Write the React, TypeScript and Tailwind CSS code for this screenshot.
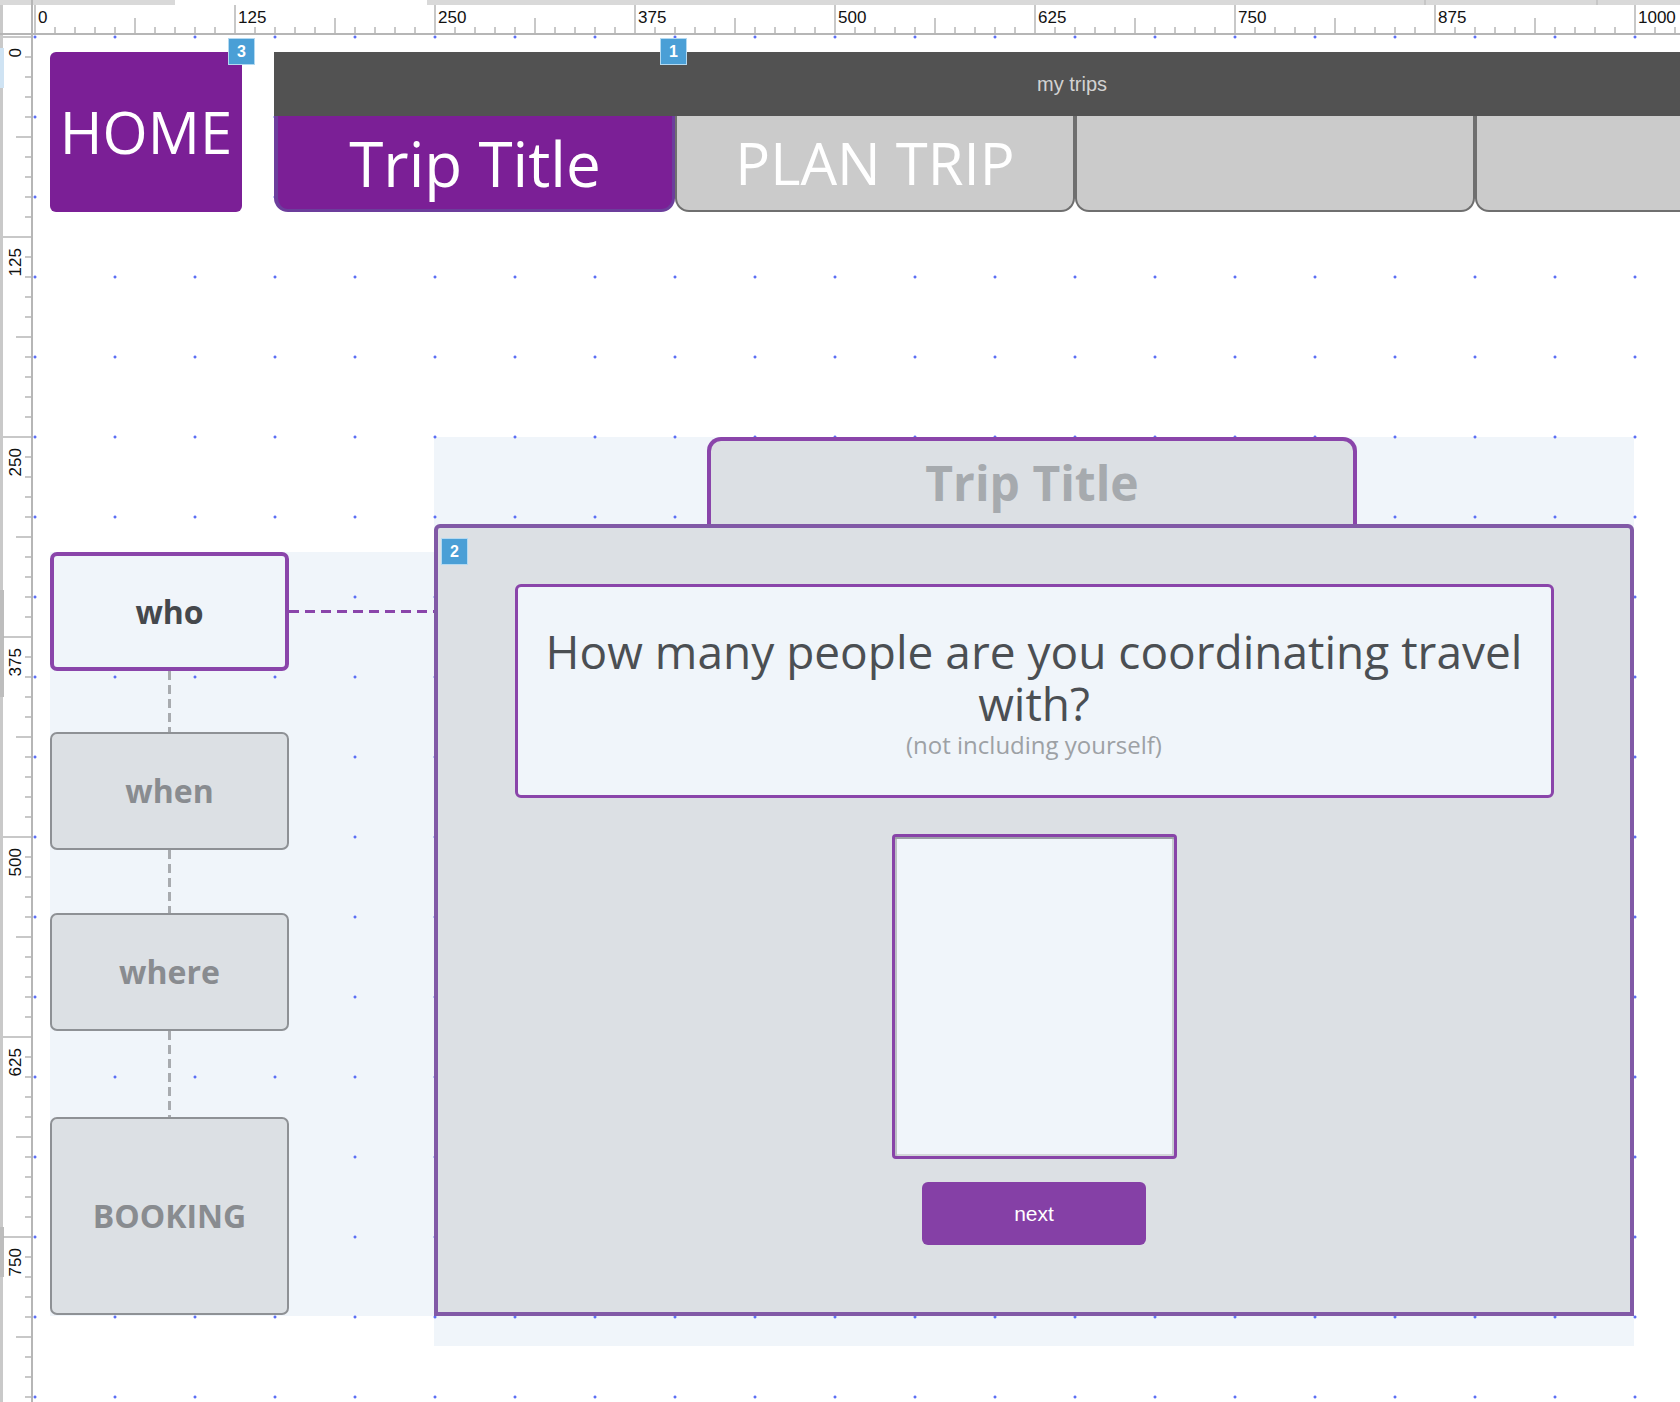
import React from "react";

// dot grid, pinned to the viewport so every panel lines up with the same grid
const DOTS =
  "bg-fixed [background-image:radial-gradient(circle,#5b6ef5_1.2px,transparent_1.8px)] [background-size:80px_80px] [background-position:-5px_-3px]";

function Badge({ n, className }: { n: string; className: string }) {
  return (
    <div
      className={`absolute z-10 w-[27px] h-[27px] bg-[#4a9fd6] border-[1.5px] border-[#b3d9f1] flex items-center justify-center text-white text-[16px] font-bold leading-none font-['Liberation_Sans',Arial,sans-serif] ${className}`}
    >
      {n}
    </div>
  );
}

function TopRuler() {
  const items = [];
  for (let k = 0; k <= 82; k++) {
    const x = 2 + 20 * k;
    const major = k % 10 === 0;
    const mid = k % 5 === 0;
    items.push(
      <line key={`t${k}`} x1={x} x2={x} y1={major ? 5 : mid ? 18 : 27} y2={34} stroke="#b6b6b6" strokeWidth={1.5} />
    );
    if (major) {
      items.push(
        <text key={`l${k}`} x={x + 3} y={23} fontSize={17} fill="#111">
          {(k / 10) * 125}
        </text>
      );
    }
  }
  return (
    <svg width={1647} height={35} className="block font-['Liberation_Sans',Arial,sans-serif]">
      <rect x={0} y={0} width={142} height={5} fill="#d9d9d9" />
      <rect x={394} y={0} width={1253} height={5} fill="#d9d9d9" />
      <line x1={1392} x2={1392} y1={0} y2={5} stroke="#b3b3b3" strokeWidth={1} />
      <line x1={1564} x2={1564} y1={0} y2={5} stroke="#b3b3b3" strokeWidth={1} />
      {items}
      <line x1={0} x2={1647} y1={34} y2={34} stroke="#b6b6b6" strokeWidth={2} />
    </svg>
  );
}

function LeftRuler() {
  const items = [];
  for (let k = 0; k <= 68; k++) {
    const y = 2 + 20 * k;
    const major = k % 10 === 0;
    const mid = k % 5 === 0;
    items.push(
      <line key={`t${k}`} x1={major ? 3 : mid ? 16 : 25} x2={32} y1={y} y2={y} stroke="#b6b6b6" strokeWidth={1.5} />
    );
    if (major) {
      const ly = y + 11;
      items.push(
        <text
          key={`l${k}`}
          x={21}
          y={ly}
          fontSize={17}
          fill="#111"
          textAnchor="end"
          transform={`rotate(-90 21 ${ly})`}
        >
          {(k / 10) * 125}
        </text>
      );
    }
  }
  return (
    <svg width={33} height={1367} className="block font-['Liberation_Sans',Arial,sans-serif]">
      <line x1={1.5} x2={1.5} y1={0} y2={1367} stroke="#c9c9c9" strokeWidth={3} />
      <rect x={0} y={13} width={4} height={40} fill="#cfe3f3" />
      <rect x={0} y={555} width={4} height={107} fill="#bdbdbd" />
      <rect x={0} y={1192} width={4} height={50} fill="#bdbdbd" />
      {items}
      <line x1={32} x2={32} y1={0} y2={1367} stroke="#b6b6b6" strokeWidth={2} />
    </svg>
  );
}

function VLine({ h }: { h: number }) {
  return (
    <div className="w-[239px] flex justify-center">
      <svg width={3} height={h} className="block">
        <line x1={1.5} x2={1.5} y1={0} y2={h} stroke="#a8abaf" strokeWidth={3} strokeDasharray="9 5" />
      </svg>
    </div>
  );
}

function StepBox({ label, className }: { label: string; className: string }) {
  return (
    <div
      className={`w-[239px] shrink-0 rounded-[7px] border-2 border-[#8e9195] bg-[#dce0e4] flex items-center justify-center text-[32px] font-bold text-[#898c90] ${className}`}
    >
      {label}
    </div>
  );
}

export default function App() {
  return (
    <div className="w-[1680px] h-[1402px] overflow-hidden bg-white grid grid-cols-[33px_1647px] grid-rows-[35px_1367px] font-['Open_Sans',sans-serif]">
      {/* ruler corner */}
      <div className="bg-white border-r-2 border-b-2 border-[#b6b6b6] flex flex-col">
        <div className="h-[5px] bg-[#d9d9d9]" />
        <div className="flex-1 border-l-[3px] border-[#c9c9c9]" />
      </div>
      <TopRuler />
      <LeftRuler />

      {/* canvas */}
      <div className={`relative overflow-hidden bg-white ${DOTS}`}>
        {/* header */}
        <div className="flex items-start mt-[17px] ml-[17px]">
          <div className="relative shrink-0 w-[192px] h-[160px] rounded-[6px] bg-[#7b1f96] flex items-center justify-center">
            <span className="text-white text-[58px] leading-none">HOME</span>
            <Badge n="3" className="left-[178px] -top-[14px]" />
          </div>

          <div className="relative shrink-0 ml-[32px] w-[1601px]">
            <div className="h-[64px] bg-[#525252] flex items-center pl-[763px]">
              <span className="text-[20px] text-[#d2d2d2] font-['Liberation_Sans',Arial,sans-serif]">my trips</span>
            </div>
            <div className="flex h-[96px]">
              <div className="w-[401px] shrink-0 bg-[#7b1f96] border-l-4 border-r-[3px] border-b-[3px] border-[#6c3e9c] rounded-b-[14px] flex items-center justify-center text-white text-[62px] leading-none">
                Trip Title
              </div>
              <div className="w-[400px] shrink-0 bg-[#cbcbcb] border-x-2 border-b-2 border-[#6f6f6f] rounded-b-[14px] flex items-center justify-center text-white text-[58px] leading-none">
                PLAN TRIP
              </div>
              <div className="w-[400px] shrink-0 bg-[#cbcbcb] border-x-2 border-b-2 border-[#6f6f6f] rounded-b-[14px]" />
              <div className="w-[400px] shrink-0 bg-[#cbcbcb] border-x-2 border-b-2 border-[#6f6f6f] rounded-b-[14px]" />
            </div>
            <Badge n="1" className="left-[386px] -top-[14px]" />
          </div>
        </div>

        {/* workflow + step card */}
        <div className="flex items-start mt-[225px] ml-[17px]">
          <div className={`shrink-0 w-[384px] h-[764px] mt-[115px] bg-[#f0f5fa] ${DOTS} flex flex-col`}>
            <div className="flex items-center">
              <div className="w-[239px] h-[119px] shrink-0 rounded-[7px] border-4 border-[#8a45aa] bg-[#f0f5fa] flex items-center justify-center text-[32px] font-bold text-[#45484c]">
                who
              </div>
              <svg width={145} height={3} className="block">
                <line x1={0} x2={145} y1={1.5} y2={1.5} stroke="#8a45aa" strokeWidth={3} strokeDasharray="10 6" />
              </svg>
            </div>
            <VLine h={61} />
            <StepBox label="when" className="h-[118px]" />
            <VLine h={63} />
            <StepBox label="where" className="h-[118px]" />
            <VLine h={86} />
            <StepBox label="BOOKING" className="h-[198px]" />
          </div>

          <div className={`shrink-0 w-[1200px] h-[909px] bg-[#f0f5fa] ${DOTS} flex flex-col`}>
            <div className="ml-[273px] w-[650px] h-[87px] shrink-0 border-4 border-b-0 border-[#8a45aa] rounded-t-[14px] bg-[#dce0e4] flex items-center justify-center">
              <span className="text-[48px] font-bold text-[#a6aaae] leading-none">Trip Title</span>
            </div>
            <div className="relative w-[1200px] h-[792px] shrink-0 border-4 border-[#8159a6] rounded-t-[6px] bg-[#dce0e4] flex flex-col items-center">
              <Badge n="2" className="left-[3px] top-[10px]" />
              <div className="mt-[56px] w-[1039px] h-[214px] shrink-0 border-[3px] border-[#8a45aa] rounded-[6px] bg-[#f0f5fa] flex flex-col items-center justify-center text-center">
                <p className="text-[46px] leading-[52px] text-[#4b4f53]">
                  How many people are you coordinating travel with?
                </p>
                <p className="mt-[3px] text-[24px] leading-[26px] text-[#9da1a5]">(not including yourself)</p>
              </div>
              <div className="mt-[36px] w-[285px] h-[325px] shrink-0 border-[3px] border-[#8844a8] rounded-[4px] bg-[#f0f5fa] shadow-[inset_0_2px_0_#9ca1a6,inset_2px_0_0_#bcc0c4,inset_-2px_0_0_#c9cdd1,inset_0_-2px_0_#d3d6d9]" />
              <button className="mt-[23px] w-[224px] h-[63px] shrink-0 rounded-[6px] bg-[#8540a6] text-white text-[21px] font-['Liberation_Sans',Arial,sans-serif] flex items-center justify-center">
                next
              </button>
            </div>
          </div>
        </div>
      </div>
    </div>
  );
}
